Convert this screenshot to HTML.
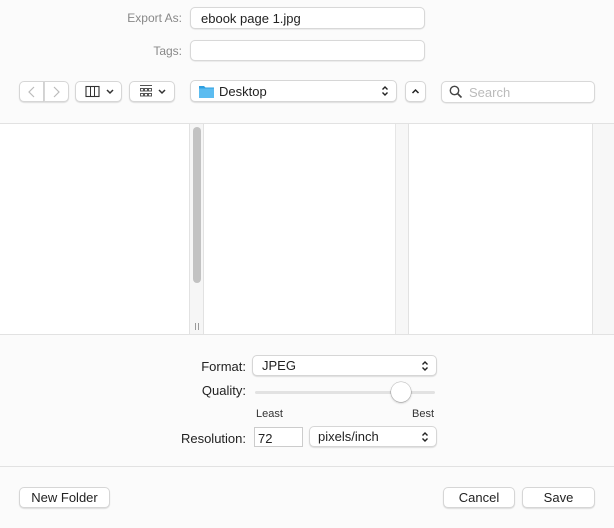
<!DOCTYPE html>
<html><head><style>
*{box-sizing:border-box;margin:0;padding:0}
body{width:614px;height:528px;background:#fbfbfb;font-family:"Liberation Sans",sans-serif;font-size:13px;color:#222;position:relative;overflow:hidden}
.a{position:absolute}
.lbl{position:absolute;text-align:right;color:#888;font-size:12px}
.fld{position:absolute;background:#fff;border:1px solid #d8d8d8;border-radius:5px;box-shadow:0 0.5px 1px rgba(0,0,0,.12)}
.btn{position:absolute;background:#fff;border:1px solid #d6d6d6;border-radius:5px;box-shadow:0 1px 1px rgba(0,0,0,.12);text-align:center;font-size:13px;color:#222}
.stp{position:absolute;right:7px;top:3px;width:8px;height:14px}
</style></head><body>
<div class="lbl" style="left:90px;width:92px;top:11px">Export As:</div>
<div class="fld" style="left:190px;top:7px;width:235px;height:22px"><span class="a" style="left:10px;top:3px;font-size:13px;color:#222">ebook page 1.jpg</span></div>
<div class="lbl" style="left:90px;width:92px;top:44px">Tags:</div>
<div class="fld" style="left:190px;top:40px;width:235px;height:21px"></div>

<div class="btn" style="left:19px;top:81px;width:25px;height:21px;border-radius:5px 0 0 5px"><svg width="23" height="19"><path d="M14 5l-5 5 5 5" fill="none" stroke="#bbb" stroke-width="1.2"/></svg></div>
<div class="btn" style="left:44px;top:81px;width:25px;height:21px;border-radius:0 5px 5px 0"><svg width="23" height="19"><path d="M9 5l5 5-5 5" fill="none" stroke="#bbb" stroke-width="1.2"/></svg></div>
<div class="btn" style="left:75px;top:81px;width:47px;height:21px"><svg width="45" height="19"><rect x="10" y="4.5" width="13" height="10" fill="none" stroke="#333" stroke-width="1.1"/><path d="M14.5 4.5v10M18.5 4.5v10" stroke="#333"/><path d="M31 8l3 3 3-3" fill="none" stroke="#333" stroke-width="1.5"/></svg></div>
<div class="btn" style="left:129px;top:81px;width:46px;height:21px"><svg width="44" height="19"><path d="M10 3.5h12" stroke="#555"/><g fill="none" stroke="#444" stroke-width=".9"><rect x="10.5" y="6.5" width="3" height="2.5"/><rect x="14.5" y="6.5" width="3" height="2.5"/><rect x="18.5" y="6.5" width="3" height="2.5"/><rect x="10.5" y="11.5" width="3" height="2.5"/><rect x="14.5" y="11.5" width="3" height="2.5"/><rect x="18.5" y="11.5" width="3" height="2.5"/></g><path d="M29 8l3 3 3-3" fill="none" stroke="#333" stroke-width="1.5"/></svg></div>
<div class="btn" style="left:190px;top:80px;width:207px;height:22px;text-align:left"><svg class="a" style="left:7px;top:3px" width="17" height="15"><path d="M1 2h5l1.5 1.5H16V14H1z" fill="#2e9fe0"/><rect x="1" y="4.5" width="15" height="9.5" fill="#5cbcf0"/></svg><span class="a" style="left:28px;top:3px;font-size:13px">Desktop</span><svg class="stp" viewBox="0 0 8 14"><path d="M1.5 5.5L4 3l2.5 2.5M1.5 8.5L4 11l2.5-2.5" fill="none" stroke="#222" stroke-width="1.4"/></svg></div>
<div class="btn" style="left:405px;top:81px;width:21px;height:21px"><svg width="19" height="19"><path d="M6.5 11l3-3 3 3" fill="none" stroke="#222" stroke-width="1.5"/></svg></div>
<div class="fld" style="left:441px;top:81px;width:154px;height:22px"><svg class="a" style="left:7px;top:3px" width="14" height="14"><circle cx="5.5" cy="5.5" r="4.2" fill="none" stroke="#444" stroke-width="1.4"/><path d="M8.5 8.5L12.5 12.5" stroke="#444" stroke-width="1.6"/></svg><span class="a" style="left:27px;top:3px;color:#bbb;font-size:13px">Search</span></div>

<div class="a" style="left:0;top:123px;width:614px;height:212px;background:#fff;border-top:1px solid #e2e2e2;border-bottom:1px solid #e2e2e2"></div>
<div class="a" style="left:189px;top:124px;width:15px;height:210px;background:#f6f6f6;border-left:1px solid #e2e2e2;border-right:1px solid #e2e2e2"></div>
<div class="a" style="left:193px;top:127px;width:8px;height:156px;background:#c2c2c2;border-radius:4px"></div>
<div class="a" style="left:195px;top:323px;width:1px;height:7px;background:#999"></div>
<div class="a" style="left:198px;top:323px;width:1px;height:7px;background:#999"></div>
<div class="a" style="left:395px;top:124px;width:14px;height:210px;background:#f7f7f7;border-left:1px solid #e6e6e6;border-right:1px solid #e2e2e2"></div>
<div class="a" style="left:592px;top:124px;width:22px;height:210px;background:#f7f7f7;border-left:1px solid #e2e2e2"></div>

<div class="a" style="left:150px;width:96px;top:359px;text-align:right">Format:</div>
<div class="btn" style="left:252px;top:355px;width:185px;height:21px;text-align:left"><span class="a" style="left:9px;top:2px">JPEG</span><svg class="stp" viewBox="0 0 8 14"><path d="M1.5 5.5L4 3l2.5 2.5M1.5 8.5L4 11l2.5-2.5" fill="none" stroke="#222" stroke-width="1.4"/></svg></div>
<div class="a" style="left:150px;width:96px;top:383px;text-align:right">Quality:</div>
<div class="a" style="left:255px;top:391px;width:180px;height:3px;background:#e2e2e2;border-radius:2px"></div>
<div class="a" style="left:391px;top:382px;width:20px;height:20px;background:#fff;border-radius:50%;box-shadow:0 0 0 .5px rgba(0,0,0,.25),0 1px 2px rgba(0,0,0,.25)"></div>
<div class="a" style="left:256px;top:408px;font-size:11px;color:#333">Least</div>
<div class="a" style="left:404px;width:30px;top:408px;font-size:11px;color:#333;text-align:right">Best</div>
<div class="a" style="left:150px;width:96px;top:431px;text-align:right">Resolution:</div>
<div class="a" style="left:254px;top:427px;width:49px;height:20px;background:#fff;border:1px solid #ccc"><span class="a" style="left:3px;top:3px">72</span></div>
<div class="btn" style="left:309px;top:426px;width:128px;height:21px;text-align:left"><span class="a" style="left:8px;top:2px">pixels/inch</span><svg class="stp" viewBox="0 0 8 14"><path d="M1.5 5.5L4 3l2.5 2.5M1.5 8.5L4 11l2.5-2.5" fill="none" stroke="#222" stroke-width="1.4"/></svg></div>

<div class="a" style="left:0;top:466px;width:614px;height:1px;background:#e2e2e2"></div>
<div class="btn" style="left:19px;top:487px;width:91px;height:21px;line-height:19px">New Folder</div>
<div class="btn" style="left:443px;top:487px;width:72px;height:21px;line-height:19px">Cancel</div>
<div class="btn" style="left:522px;top:487px;width:73px;height:21px;line-height:19px">Save</div>
</body></html>
